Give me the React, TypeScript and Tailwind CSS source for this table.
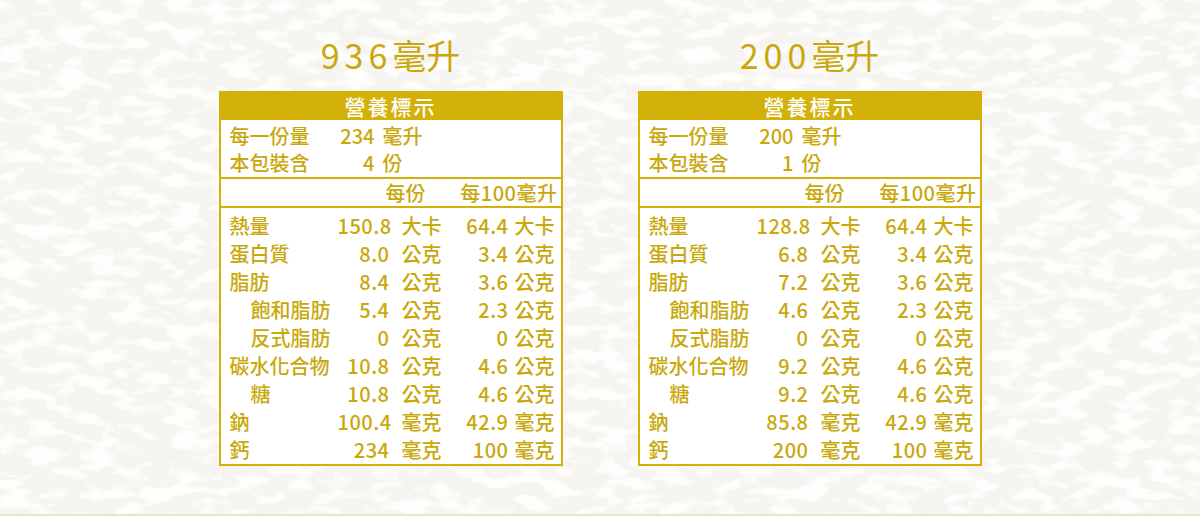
import React from 'react';

type Row = { label: string; indent?: boolean; v1: string; u1: string; v2: string; u2: string };

type Label = {
  title: string;
  serving: string;
  servingUnit: string;
  pack: string;
  rows: Row[];
};

const labels: Label[] = [
  {
    title: '936',
    serving: '234',
    servingUnit: '毫升',
    pack: '4',
    rows: [
      { label: '熱量', v1: '150.8', u1: '大卡', v2: '64.4', u2: '大卡' },
      { label: '蛋白質', v1: '8.0', u1: '公克', v2: '3.4', u2: '公克' },
      { label: '脂肪', v1: '8.4', u1: '公克', v2: '3.6', u2: '公克' },
      { label: '飽和脂肪', indent: true, v1: '5.4', u1: '公克', v2: '2.3', u2: '公克' },
      { label: '反式脂肪', indent: true, v1: '0', u1: '公克', v2: '0', u2: '公克' },
      { label: '碳水化合物', v1: '10.8', u1: '公克', v2: '4.6', u2: '公克' },
      { label: '糖', indent: true, v1: '10.8', u1: '公克', v2: '4.6', u2: '公克' },
      { label: '鈉', v1: '100.4', u1: '毫克', v2: '42.9', u2: '毫克' },
      { label: '鈣', v1: '234', u1: '毫克', v2: '100', u2: '毫克' },
    ],
  },
  {
    title: '200',
    serving: '200',
    servingUnit: '毫升',
    pack: '1',
    rows: [
      { label: '熱量', v1: '128.8', u1: '大卡', v2: '64.4', u2: '大卡' },
      { label: '蛋白質', v1: '6.8', u1: '公克', v2: '3.4', u2: '公克' },
      { label: '脂肪', v1: '7.2', u1: '公克', v2: '3.6', u2: '公克' },
      { label: '飽和脂肪', indent: true, v1: '4.6', u1: '公克', v2: '2.3', u2: '公克' },
      { label: '反式脂肪', indent: true, v1: '0', u1: '公克', v2: '0', u2: '公克' },
      { label: '碳水化合物', v1: '9.2', u1: '公克', v2: '4.6', u2: '公克' },
      { label: '糖', indent: true, v1: '9.2', u1: '公克', v2: '4.6', u2: '公克' },
      { label: '鈉', v1: '85.8', u1: '毫克', v2: '42.9', u2: '毫克' },
      { label: '鈣', v1: '200', u1: '毫克', v2: '100', u2: '毫克' },
    ],
  },
];

function PaperTexture() {
  return (
    <svg className="absolute inset-0 h-full w-full" aria-hidden="true">
      <defs>
        <filter id="paper" x="0" y="0" width="100%" height="100%">
          <feTurbulence type="fractalNoise" baseFrequency="0.03 0.07" numOctaves="3" seed="7" result="n" />
          <feColorMatrix
            in="n"
            type="matrix"
            values="0 0 0 0 0.84  0 0 0 0 0.83  0 0 0 0 0.8  3.2 0 0 0 -1.45"
            result="m"
          />
          <feComponentTransfer in="m">
            <feFuncA type="discrete" tableValues="0 0.06 0.1 0.14" />
          </feComponentTransfer>
        </filter>
        <filter id="paper2" x="0" y="0" width="100%" height="100%">
          <feTurbulence type="fractalNoise" baseFrequency="0.035 0.08" numOctaves="2" seed="21" result="n" />
          <feColorMatrix
            in="n"
            type="matrix"
            values="0 0 0 0 1  0 0 0 0 1  0 0 0 0 0.99  3.2 0 0 0 -1.4"
            result="m"
          />
          <feComponentTransfer in="m">
            <feFuncA type="discrete" tableValues="0 0.5 0.8 0.9" />
          </feComponentTransfer>
        </filter>
      </defs>
      <rect width="100%" height="100%" filter="url(#paper)" />
      <rect width="100%" height="100%" filter="url(#paper2)" />
    </svg>
  );
}

function NutritionTable({ data }: { data: Label }) {
  return (
    <div className="flex w-[344px] flex-col items-center">
      <div className="whitespace-nowrap pt-[33px] pb-[14px] text-[34px] leading-[44px] text-[#c9a80c]">
        <span className="tracking-[5px]">{data.title}</span>
        <span>毫升</span>
      </div>
      <div className="w-[344px] border-2 border-[#d3b109] bg-white text-[20px] font-medium text-[#c9a80c]">
        <div className="h-[27px] whitespace-nowrap bg-[#d3b109] text-center text-[21px] leading-[27px] tracking-[2px] text-white">
          營養標示
        </div>
        <div className="pt-[2px] pb-[1px] pl-[9px]">
          <div className="grid h-[27px] grid-cols-[100px_45px_1fr] whitespace-nowrap leading-[27px]">
            <span>每一份量</span>
            <span className="text-right">{data.serving}</span>
            <span className="pl-[8px]">{data.servingUnit}</span>
          </div>
          <div className="grid h-[27px] grid-cols-[100px_45px_1fr] whitespace-nowrap leading-[27px]">
            <span>本包裝含</span>
            <span className="text-right">{data.pack}</span>
            <span className="pl-[8px]">份</span>
          </div>
        </div>
        <div className="grid h-[29px] grid-cols-[108px_52px_51px_68px_1fr] whitespace-nowrap border-t-2 border-[#d3b109] pl-[9px] leading-[27px]">
          <span />
          <span className="col-span-2 pr-[15px] text-right">每份</span>
          <span className="col-span-2 pr-[3px] text-right tracking-[0.5px]">每100毫升</span>
        </div>
        <div className="border-t-2 border-[#d3b109] pt-[4px]">
          {data.rows.map((r) => (
            <div
              key={r.label}
              className="grid h-[28px] grid-cols-[108px_52px_51px_68px_1fr] whitespace-nowrap pl-[9px] leading-[28px]"
            >
              <span className={r.indent ? 'pl-[21px]' : ''}>{r.label}</span>
              <span className="text-right tracking-[0.5px]">{r.v1}</span>
              <span className="pl-[12px]">{r.u1}</span>
              <span className="text-right tracking-[0.5px]">{r.v2}</span>
              <span className="pl-[6px]">{r.u2}</span>
            </div>
          ))}
        </div>
      </div>
    </div>
  );
}

export default function App() {
  return (
    <div className="relative flex h-[516px] w-full flex-col overflow-hidden bg-[#f6f5f1] font-['Noto_Sans_CJK_TC','Noto_Sans_CJK_SC',sans-serif]">
      <PaperTexture />
      <div className="relative flex flex-1 justify-center gap-[75px]">
        {labels.map((l) => (
          <NutritionTable key={l.title} data={l} />
        ))}
      </div>
      <div className="relative h-[2px] w-full bg-[#e3e9c3]" />
    </div>
  );
}
